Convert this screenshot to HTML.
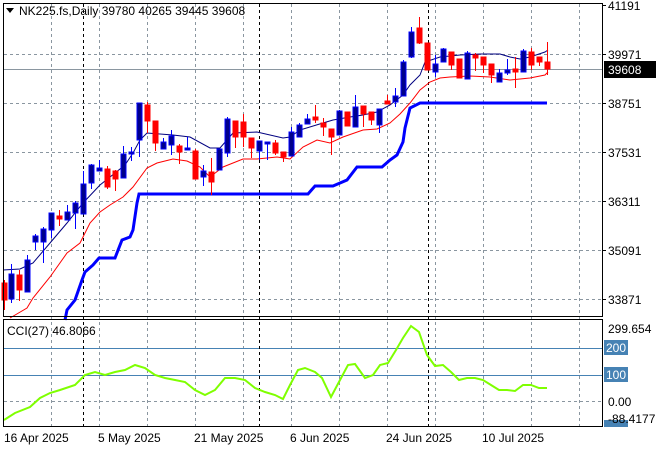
<!DOCTYPE html>
<html><head><meta charset="utf-8"><style>
body{margin:0;background:#fff;width:660px;height:450px;overflow:hidden;font-family:"Liberation Sans",sans-serif;}
svg{position:absolute;left:0;top:0}
text{font-family:"Liberation Sans",sans-serif;font-size:12px;fill:#000}
</style></head><body>
<svg id="s" width="660" height="450" xmlns="http://www.w3.org/2000/svg">
<g id="grid" stroke="#8a96a0" stroke-dasharray="3,3" stroke-width="1"></g>
<line x1="4" y1="69.5" x2="602" y2="69.5" stroke="#8a96a0"/>
<line x1="4" y1="348.5" x2="602" y2="348.5" stroke="#4682b4"/>
<line x1="4" y1="375.5" x2="602" y2="375.5" stroke="#4682b4"/>
<g stroke="#000" stroke-dasharray="3,3"><line x1="83.5" y1="4" x2="83.5" y2="426"/><line x1="259.5" y1="4" x2="259.5" y2="426"/><line x1="428.5" y1="4" x2="428.5" y2="426"/></g>
<polyline fill="none" stroke="#0000ff" stroke-width="3" points="65,320 67,310 75,300 82,280 85,272 93,265 99,258 115,258 122,240 130,237 133,230 137,203 139,194 308,194 315,186 333,186 347,180 357,167 382,167 390,160 397,155 403,142 405,128 410,108 420,103 547,103"/>
<polyline fill="none" stroke="#ff0000" stroke-width="1" points="10,318 27,308 33,298 50,277 67,253 80,243 90,223 100,212 110,205 123,197 133,187 147,168 157,163 173,159 187,161 200,167 210,177 223,167 243,159 257,159 277,157 290,159 303,147 317,140 330,143 343,137 363,130 377,129 390,123 400,114 410,103 420,90 430,82 440,78 450,77 470,76 490,77 510,80 530,78 545,75 548,72"/>
<polyline fill="none" stroke="#000080" stroke-width="1" points="3,270 20,269 33,263 50,243 67,223 83,203 100,185 125,165 133,153 140,140 147,133 173,135 190,137 210,148 220,148 233,133 257,132 283,138 290,137 300,130 323,123 333,120 350,117 363,115 377,112 390,105 403,95 410,85 420,75 425,62 440,57 460,55 480,54 500,54 510,57 520,59 530,57 545,52 548,50"/>
<g id="c"></g>
<polyline fill="none" stroke="#7fff00" stroke-width="2" points="4,420 15,413 30,407 40,398 50,393 60,390 75,385 85,375 95,372 105,375 115,372 125,370 135,365 145,368 155,375 165,378 175,380 185,382 195,390 205,395 215,390 225,378 235,378 245,380 255,388 265,392 275,395 283,399 290,385 298,370 305,368 315,372 322,378 331,397 340,380 348,365 355,364 365,378 373,375 380,365 388,363 396,350 403,338 411,326 419,332 427,355 435,366 443,365 451,372 459,380 467,378 475,378 483,380 491,385 499,390 507,390 515,391 523,385 531,385 539,388 547,388"/>
<rect x="3.5" y="3.5" width="599" height="313" fill="none" stroke="#000"/>
<rect x="3.5" y="319.5" width="599" height="107" fill="none" stroke="#000"/>
<path d="M6 8 L14 8 L10 13 Z" fill="#000"/>
<text x="19" y="15">NK225.fs,Daily  39780 40265 39445 39608</text>
<text x="7" y="335">CCI(27) 46.8066</text>
<g id="ax"></g>
<rect x="604" y="61" width="52" height="17" fill="#000"/>
<text x="608" y="74" style="fill:#fff">39608</text>
<rect x="604" y="340" width="24" height="15" fill="#4682b4"/>
<text x="606" y="352" style="fill:#fff">200</text>
<rect x="604" y="367" width="24" height="15" fill="#4682b4"/>
<text x="606" y="379" style="fill:#fff">100</text>
<rect x="604" y="420" width="24" height="7" fill="#4682b4"/>
<text x="608" y="333">299.654</text>
<text x="608" y="406">0.00</text>
<text x="608" y="423">-88.4177</text>
<text x="4" y="442">16 Apr 2025</text>
<text x="98" y="442">5 May 2025</text>
<text x="194" y="442">21 May 2025</text>
<text x="290" y="442">6 Jun 2025</text>
<text x="386" y="442">24 Jun 2025</text>
<text x="482" y="442">10 Jul 2025</text>
</svg>
<script>
var NS="http://www.w3.org/2000/svg";
function el(p,t,a){var e=document.createElementNS(NS,t);for(var k in a)e.setAttribute(k,a[k]);p.appendChild(e);return e;}
var g=document.getElementById('grid');
[51,99,147,195,243,291,339,387,435,483,531,579].forEach(function(x){el(g,'line',{x1:x+.5,y1:4,x2:x+.5,y2:426});});
[54,103,152,201,250,299].forEach(function(y){el(g,'line',{x1:4,y1:y+.5,x2:602,y2:y+.5});});
el(g,'line',{x1:4,y1:401.5,x2:602,y2:401.5});
var ax=document.getElementById('ax');
[[5,"41191"],[54,"39971"],[103,"38751"],[152,"37531"],[201,"36311"],[250,"35091"],[299,"33871"]].forEach(function(p){
 var t=el(ax,'text',{x:608,y:p[0]+5});t.textContent=p[1];
 el(ax,'line',{x1:602,y1:p[0]+.5,x2:606,y2:p[0]+.5,stroke:'#000'});});
var D=[[4,283,300,280,310,'r'],[11,274,299,264,303,'b'],[19,275,290,270,301,'r'],[27,260,292,255,292,'b'],[35,236,242,234,250,'b'],[43,229,242,227,263,'b'],[51,213,230,213,238,'b'],[59,216,219,210,226,'r'],[67,212,220,205,220,'b'],[75,203,213,201,229,'b'],[83,184,214,171,214,'b'],[91,165,183,164,189,'b'],[99,168,171,160,171,'b'],[107,169,187,166,189,'r'],[115,171,179,170,191,'r'],[123,154,178,146,178,'b'],[131,152,154,147,161,'b'],[139,103,140,103,157,'b'],[147,105,121,102,133,'r'],[155,121,143,121,151,'r'],[163,142,149,138,149,'b'],[171,136,145,130,155,'b'],[179,146,152,144,164,'r'],[187,148,150,137,150,'b'],[195,151,179,149,179,'r'],[203,171,177,165,186,'b'],[211,172,182,158,195,'r'],[219,149,170,149,170,'b'],[227,119,153,117,157,'b'],[235,121,137,121,148,'r'],[243,122,137,114,147,'r'],[251,138,148,138,158,'r'],[259,141,151,141,160,'b'],[267,142,144,142,160,'b'],[275,143,153,140,155,'r'],[283,152,157,152,162,'r'],[291,132,156,127,156,'b'],[299,125,137,123,137,'b'],[307,119,124,114,124,'b'],[315,117,120,105,123,'r'],[323,123,127,118,136,'r'],[331,129,137,129,155,'r'],[339,111,135,110,135,'b'],[347,112,126,112,126,'r'],[355,107,127,95,127,'b'],[363,106,114,106,127,'r'],[371,112,120,112,125,'r'],[379,109,125,109,133,'b'],[387,101,104,95,104,'r'],[395,96,102,88,107,'b'],[403,62,96,60,96,'b'],[411,32,57,27,58,'b'],[419,28,43,17,44,'r'],[427,43,70,43,70,'r'],[435,64,72,55,77,'b'],[443,49,62,48,62,'b'],[451,52,65,52,70,'r'],[459,59,78,59,78,'r'],[467,53,79,51,79,'b'],[475,55,58,53,71,'r'],[483,57,65,57,73,'r'],[491,64,75,64,83,'r'],[499,73,82,69,82,'b'],[507,70,73,59,75,'b'],[515,69,72,57,88,'r'],[523,51,72,49,72,'b'],[531,52,65,48,70,'r'],[539,57,62,57,66,'r'],[547,62,69,42,75,'r']];
var c=document.getElementById('c');
D.forEach(function(d){var col=d[5]=='r'?'#ff0000':'#0000ff';var fill=d[5]=='r'?'#ff0000':'#00008b';
 el(c,'line',{x1:d[0]+.5,y1:d[3],x2:d[0]+.5,y2:d[4],stroke:col});
 el(c,'rect',{x:d[0]-2,y:d[1],width:5,height:Math.max(1,d[2]-d[1]),fill:fill,stroke:col,'stroke-width':1});});
</script>
</body></html>
